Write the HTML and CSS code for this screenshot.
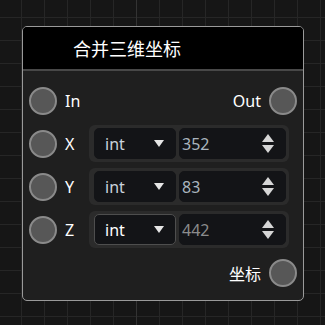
FILE: index.html
```html
<!DOCTYPE html>
<html lang="zh">
<head>
    <meta charset="UTF-8">
    <meta name="viewport" content="width=device-width, initial-scale=1.0">
    <title>合并三维坐标</title>
    <link rel="stylesheet" href="styles.css">
</head>
<body>
    <div class="canvas">
        <div class="node">
            <div class="node-header">
                <span class="node-title">合并三维坐标</span>
            </div>
            <div class="node-body">
                <div class="row">
                    <span class="port"></span>
                    <span class="port-label">In</span>
                    <span class="spacer"></span>
                    <span class="port-label out">Out</span>
                    <span class="port"></span>
                </div>
                <div class="row">
                    <span class="port"></span>
                    <span class="port-label axis">X</span>
                    <div class="widget">
                        <div class="select">
                            <span>int</span>
                            <svg width="10" height="7" viewBox="0 0 10 7"><path d="M0 0H10L5 7Z" fill="#e6e6e6"/></svg>
                        </div>
                        <div class="number">
                            <span>352</span>
                            <svg width="12" height="19" viewBox="0 0 12 19"><path d="M6 0L12 8H0Z M0 11H12L6 19Z" fill="#d6d6d6"/></svg>
                        </div>
                    </div>
                </div>
                <div class="row">
                    <span class="port"></span>
                    <span class="port-label axis">Y</span>
                    <div class="widget">
                        <div class="select">
                            <span>int</span>
                            <svg width="10" height="7" viewBox="0 0 10 7"><path d="M0 0H10L5 7Z" fill="#e6e6e6"/></svg>
                        </div>
                        <div class="number">
                            <span>83</span>
                            <svg width="12" height="19" viewBox="0 0 12 19"><path d="M6 0L12 8H0Z M0 11H12L6 19Z" fill="#d6d6d6"/></svg>
                        </div>
                    </div>
                </div>
                <div class="row">
                    <span class="port"></span>
                    <span class="port-label axis">Z</span>
                    <div class="widget">
                        <div class="select focused">
                            <span>int</span>
                            <svg width="10" height="7" viewBox="0 0 10 7"><path d="M0 0H10L5 7Z" fill="#e6e6e6"/></svg>
                        </div>
                        <div class="number dim">
                            <span>442</span>
                            <svg width="12" height="19" viewBox="0 0 12 19"><path d="M6 0L12 8H0Z M0 11H12L6 19Z" fill="#d6d6d6"/></svg>
                        </div>
                    </div>
                </div>
                <div class="row">
                    <span class="spacer"></span>
                    <span class="port-label out">坐标</span>
                    <span class="port"></span>
                </div>
            </div>
        </div>
    </div>
</body>
</html>
```

FILE: styles.css
```css
body {
    margin: 0;
    font-family: "Noto Sans", "Noto Sans CJK SC", sans-serif;
    color: #fff;
}
.canvas {
    width: 325px;
    height: 325px;
    box-sizing: border-box;
    padding: 26px 0 0 22px;
    background-color: #161616;
    background-image:
        linear-gradient(to right, #333 1px, transparent 1px),
        linear-gradient(to right, #262626 1px, transparent 1px),
        linear-gradient(to bottom, #262626 1px, transparent 1px);
    background-size: 230px 100%, 23px 23px, 23px 23px;
    background-position: 136px 0, 21px 0, 0 17px;
}
.node {
    width: 282px;
    height: 275px;
    box-sizing: border-box;
    border: 1px solid #9a9a9a;
    border-radius: 5px;
    background: #1f1f1f;
    overflow: hidden;
}
.node-header {
    height: 42px;
    background: #000;
    border-bottom: 2px solid #484848;
    display: flex;
    align-items: center;
    padding-left: 50px;
}
.node-title {
    font-size: 18px;
}
.node-body {
    padding: 8px 6px 0 6px;
}
.row {
    height: 43px;
    display: flex;
    align-items: center;
}
.port {
    width: 28px;
    height: 28px;
    box-sizing: border-box;
    border-radius: 50%;
    border: 2px solid #8a8a8a;
    background: #575757;
    flex: none;
}
.port-label {
    font-size: 16px;
    margin-left: 8px;
}
.port-label.out {
    margin-left: 0;
    margin-right: 8px;
}
.port-label.axis {
    width: 24px;
}
.spacer {
    flex: 1;
}
.widget {
    width: 200px;
    height: 37px;
    box-sizing: border-box;
    padding: 3px 3px 3px 5px;
    background: #2b2b2b;
    border-radius: 6px;
    display: flex;
    gap: 3px;
}
.select, .number {
    box-sizing: border-box;
    background: #131417;
    border-radius: 5px;
    border: 1px solid #131417;
    display: flex;
    align-items: center;
    justify-content: space-between;
    font-size: 16px;
}
.select {
    width: 82px;
    padding: 0 11px 0 10px;
    color: #c9d2dc;
}
.select.focused {
    border-color: #4e4e4e;
    color: #fff;
}
.number {
    flex: 1;
    padding: 0 11px 0 2px;
    color: #aab4be;
}
.number.dim {
    color: #8c8c8c;
}
```
